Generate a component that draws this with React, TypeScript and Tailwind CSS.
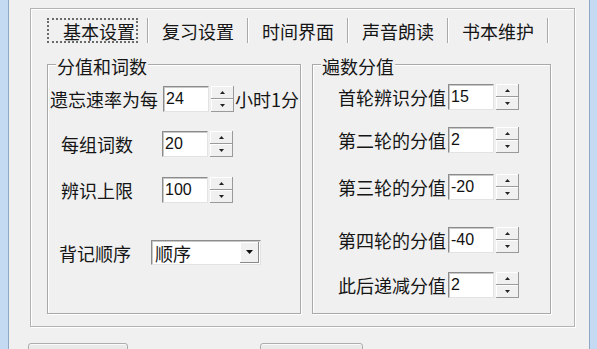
import React from "react";

function Arrow({ up }: { up?: boolean }) {
  return (
    <svg width="5" height="3" viewBox="0 0 5 3">
      {up ? <path d="M2.5 0 L5 3 L0 3 Z" fill="#222" /> : <path d="M0 0 L5 0 L2.5 3 Z" fill="#222" />}
    </svg>
  );
}

function Spin({ h = 26 }: { h?: number }) {
  return (
    <div className="ml-[2px] flex w-[23px] flex-col" style={{ height: h }}>
      <div className="flex flex-1 items-center justify-center border-r border-b border-[#9a9a9a] bg-[#f0f0f0] shadow-[inset_1px_1px_0_#fff]">
        <Arrow up />
      </div>
      <div className="flex flex-1 items-center justify-center border-r border-b border-[#9a9a9a] bg-[#f0f0f0] shadow-[inset_1px_1px_0_#fff]">
        <Arrow />
      </div>
    </div>
  );
}

function Field({ v }: { v: string }) {
  return (
    <div className="flex h-[26px] w-[46px] items-center border border-[#8c8c8c] border-r-[#e3e3e3] border-b-[#e3e3e3] bg-white pl-[2px] font-['Liberation_Sans',sans-serif] text-[16px] text-[#111] shadow-[inset_1px_1px_0_#c8c8c8]">
      {v}
    </div>
  );
}

function Group({ title, className, children }: { title: string; className: string; children: React.ReactNode }) {
  return (
    <div className={`relative h-[250px] border border-[#a9a9a9] shadow-[inset_1px_1px_0_#fff,1px_1px_0_#fff] ${className}`}>
      <div className="absolute top-[-9px] left-[8px] bg-[#f0f0f0] px-[1px] text-[18px] leading-[20px]">{title}</div>
      {children}
    </div>
  );
}

function Sep() {
  return <div className="h-[25px] w-[2px] border-l border-[#a9a9a9] bg-white" />;
}

const tabs = ["复习设置", "时间界面", "声音朗读", "书本维护"];

const rounds: [string, string, string][] = [
  ["首轮辨识分值", "15", "mt-[19px]"],
  ["第二轮的分值", "2", "mt-[17px]"],
  ["第三轮的分值", "-20", "mt-[21px]"],
  ["第四轮的分值", "-40", "mt-[27px]"],
  ["此后递减分值", "2", "mt-[19px]"],
];

export default function App() {
  return (
    <div className="flex h-[349px] w-[597px] overflow-hidden bg-[#f0f0f0] font-['Noto_Sans_CJK_SC',sans-serif] text-[#151515]">
      <div className="h-full w-[9px] shrink-0 border-r border-[#8ea9c6] bg-[#c3daf2]" />

      <div className="flex flex-1 flex-col pt-[8px] pl-[21px]">
        {/* tab page frame */}
        <div className="h-[319px] w-[545px] shrink-0 border border-[#b3b3b3] shadow-[inset_1px_1px_0_#fff,1px_1px_0_#fff]">
          <div className="mt-[9px] ml-[16px] flex h-[25px] text-[18px] leading-none">
            <div className="flex w-[100px]">
              <div className="flex h-[25px] w-[91px] items-center justify-end border-2 border-dotted border-[#6a6a6a] pr-[1px]">
                基本设置
              </div>
            </div>
            {tabs.map((t) => (
              <React.Fragment key={t}>
                <Sep />
                <div className="flex w-[98px] items-center justify-center">{t}</div>
              </React.Fragment>
            ))}
            <Sep />
          </div>

          <div className="mt-[21px] ml-[16px] flex gap-[11px] text-[18px] leading-none">
            <Group title="分值和词数" className="w-[254px]">
              <div className="flex flex-col">
                <div className="mt-[21px] flex items-center pl-[2px]">
                  <span className="w-[108px]">遗忘速率为每</span>
                  <div className="ml-[5px]">
                    <Field v="24" />
                  </div>
                  <Spin />
                  <span className="ml-[1px] whitespace-nowrap">小时1分</span>
                </div>
                <div className="mt-[19px] flex items-center pl-[13px]">
                  <span className="w-[101px]">每组词数</span>
                  <Field v="20" />
                  <Spin />
                </div>
                <div className="mt-[20px] flex items-center pl-[13px]">
                  <span className="w-[101px]">辨识上限</span>
                  <Field v="100" />
                  <Spin />
                </div>
                <div className="mt-[37px] flex items-center pl-[11px]">
                  <span className="w-[92px]">背记顺序</span>
                  <div className="flex h-[25px] w-[110px] items-center border border-[#8c8c8c] border-r-[#e3e3e3] border-b-[#e3e3e3] bg-white pl-[3px] shadow-[inset_1px_1px_0_#c8c8c8]">
                    <span className="flex-1">顺序</span>
                    <div className="mr-[1px] flex h-[21px] w-[19px] items-center justify-center border-r border-b border-[#8a8a8a] bg-[#f0f0f0] shadow-[inset_1px_1px_0_#fff]">
                      <svg width="7" height="4" viewBox="0 0 7 4">
                        <path d="M0 0 L7 0 L3.5 4 Z" fill="#111" />
                      </svg>
                    </div>
                  </div>
                </div>
              </div>
            </Group>

            <Group title="遍数分值" className="w-[239px]">
              <div className="flex flex-col pr-[31px]">
                {rounds.map(([label, v, mt]) => (
                  <div key={label} className={`flex items-center justify-end ${mt}`}>
                    <span>{label}</span>
                    <div className="ml-[2px]">
                      <Field v={v} />
                    </div>
                    <Spin />
                  </div>
                ))}
              </div>
            </Group>
          </div>
        </div>

        {/* dialog buttons, only their tops show */}
        <div className="mt-[16px] flex shrink-0">
          <div className="ml-[-2px] h-[20px] w-[100px] shrink-0 rounded-[3px] border border-[#adadad] bg-[#e9e9e9] shadow-[inset_0_1px_0_#fafafa]" />
          <div className="ml-[132px] h-[20px] w-[103px] shrink-0 rounded-[3px] border border-[#adadad] bg-[#e9e9e9] shadow-[inset_0_1px_0_#fafafa]" />
        </div>
      </div>

      <div className="h-full w-[8px] shrink-0 border-l border-[#8ea9c6] bg-[#c3daf2]" />
    </div>
  );
}
